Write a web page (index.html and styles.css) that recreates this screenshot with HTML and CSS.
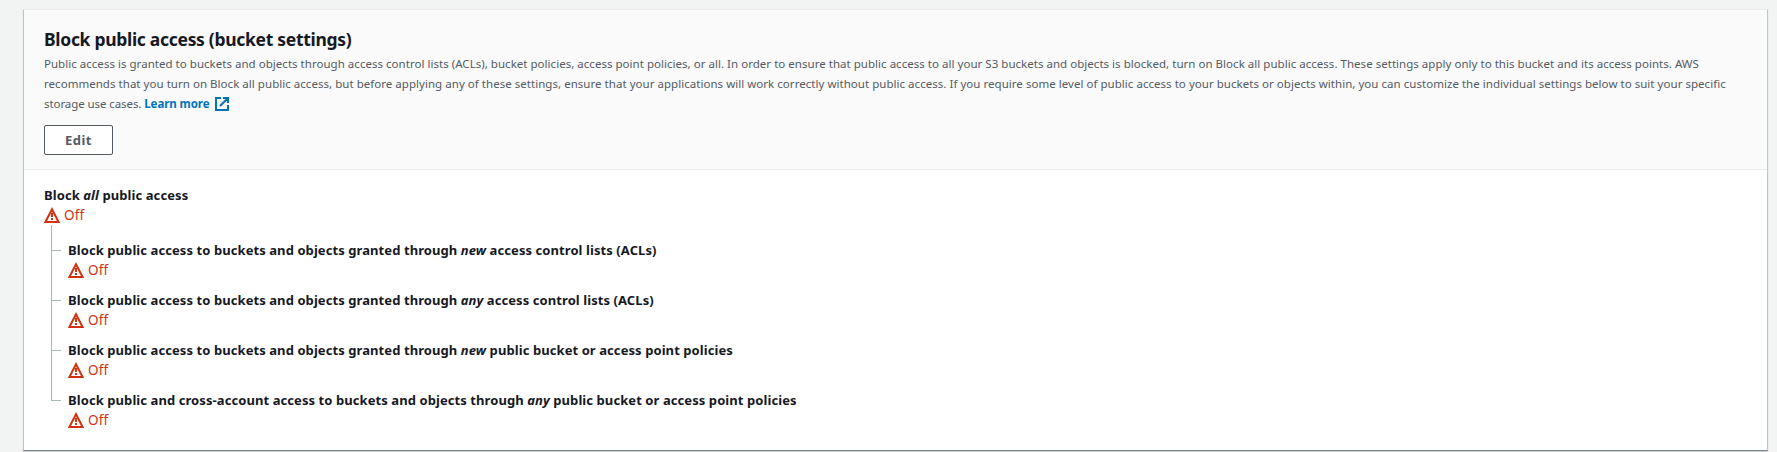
FILE: index.html
```html
<!DOCTYPE html>
<html lang="en">
<head>
<meta charset="utf-8">
<title>Block public access</title>
<link rel="stylesheet" href="styles.css">
</head>
<body>
<svg class="defs" width="0" height="0" aria-hidden="true">
  <symbol id="warning" viewBox="0 0 16 16">
    <path d="M8 2.2 14.6 15H1.4Z" fill="none" stroke="currentColor" stroke-width="2"/>
    <path d="M8 6v4M8 11v2" fill="none" stroke="currentColor" stroke-width="2"/>
  </symbol>
</svg>
<section class="card">
  <header class="card-header">
    <h2 class="title">Block public access (bucket settings)</h2>
    <p class="description"><span class="first-line">Public access is granted to buckets and objects through access control lists (ACLs), bucket policies, access point policies, or all. In order to ensure that public access to all your S3 buckets and objects is blocked, turn on Block all public access. These settings apply only to this bucket and its access points. AWS</span><br>
    recommends that you turn on Block all public access, but before applying any of these settings, ensure that your applications will work correctly without public access. If you require some level of public access to your buckets or objects within, you can customize the individual settings below to suit your specific<br>
    <span class="last-line">storage use cases. <a class="link">Learn more<svg class="external" viewBox="0 0 14 14" width="14" height="14"><path d="M6 1H1v12h12V8M8 1h5v5M13 1 5 9" fill="none" stroke="currentColor" stroke-width="2"/></svg></a></span></p>
    <button class="button">Edit</button>
  </header>
  <div class="card-body">
    <div class="setting">
      <div class="label">Block <em>all</em> public access</div>
      <div class="status"><svg class="icon"><use href="#warning"/></svg>Off</div>
    </div>
    <ul class="tree">
      <li class="setting">
        <div class="label">Block public access to buckets and objects granted through <em>new</em> access control lists (ACLs)</div>
        <div class="status"><svg class="icon"><use href="#warning"/></svg>Off</div>
      </li>
      <li class="setting">
        <div class="label">Block public access to buckets and objects granted through <em>any</em> access control lists (ACLs)</div>
        <div class="status"><svg class="icon"><use href="#warning"/></svg>Off</div>
      </li>
      <li class="setting">
        <div class="label">Block public access to buckets and objects granted through <em>new</em> public bucket or access point policies</div>
        <div class="status"><svg class="icon"><use href="#warning"/></svg>Off</div>
      </li>
      <li class="setting">
        <div class="label">Block public and cross-account access to buckets and objects through <em>any</em> public bucket or access point policies</div>
        <div class="status"><svg class="icon"><use href="#warning"/></svg>Off</div>
      </li>
    </ul>
  </div>
</section>
</body>
</html>
```
FILE: styles.css
```css
* { box-sizing: border-box; }
body {
  margin: 0;
  height: 452px;
  padding: 9px 9px 0 23px;
  overflow: hidden;
  background: #f2f3f3;
  color: #16191f;
  font-family: "Noto Sans", sans-serif;
  font-size: 13px;
  line-height: 20px;
}
.defs { display: none; }
.card {
  height: 442px;
  background: #fff;
  border: 1px solid #bfc4c4;
  border-top-color: #eaeded;
  border-bottom-color: #748488;
  box-shadow: 0 1px 1px rgba(0, 28, 36, 0.15);
}
.card-header {
  height: 160px;
  padding: 17px 20px 0;
  background: #fafafa;
  border-bottom: 1px solid #eaeded;
}
.title { margin: 0; font-size: 17.5px; line-height: 24px; font-weight: 700; letter-spacing: -0.3px; }
.description { margin: 3px 0 11px; color: #545b64; font-size: 11.5px; letter-spacing: 0.036px; white-space: nowrap; }
.first-line { letter-spacing: 0.029px; }
.last-line { letter-spacing: -0.08px; }
.link { color: #0073bb; font-weight: 700; }
.external { margin-left: 6px; vertical-align: -3px; }
.button {
  display: block;
  width: 69px;
  height: 30px;
  padding: 0;
  border: 1px solid #545b64;
  border-radius: 2px;
  background: #fff;
  color: #545b64;
  font: 700 13px/20px "Noto Sans", sans-serif;
  letter-spacing: 0.5px;
}
.card-body { padding: 15px 20px; }
.label { font-weight: 700; letter-spacing: 0.079px; white-space: nowrap; }
.status { display: flex; align-items: center; gap: 4px; height: 20px; color: #d13212; font-size: 13.5px; letter-spacing: 0.1px; }
.icon { width: 16px; height: 16px; }
.tree { position: relative; list-style: none; margin: 15px 0 0 7px; padding: 0; display: grid; gap: 10px; }
.tree::before {
  content: "";
  position: absolute;
  left: 0;
  top: -15px;
  bottom: 29px;
  border-left: 1px solid #aab7b8;
}
.tree .setting { position: relative; padding-left: 17px; }
.tree .setting::before {
  content: "";
  position: absolute;
  left: 1px;
  top: 10px;
  width: 9px;
  border-top: 1px solid #aab7b8;
}
```
